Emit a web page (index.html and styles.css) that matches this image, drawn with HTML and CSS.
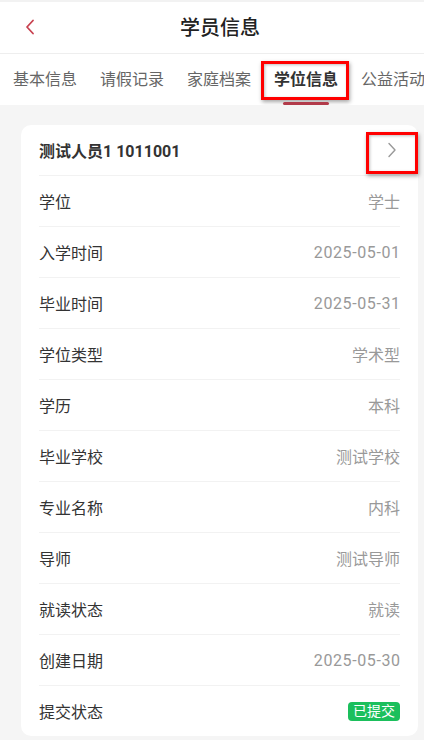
FILE: index.html
```html
<!DOCTYPE html>
<html lang="zh-CN">
<head>
<meta charset="utf-8">
<title>学员信息</title>
<link rel="stylesheet" href="styles.css">
</head>
<body>
<div class="top-strip"></div>
<header class="navbar">
  <span class="back">
    <svg width="10" height="16" viewBox="0 0 10 16"><path d="M8 1.5 L2 8 L8 14.5" fill="none" stroke="#c8414f" stroke-width="1.8" stroke-linecap="round" stroke-linejoin="round"/></svg>
  </span>
  <h1 class="title">学员信息</h1>
</header>
<nav class="tabs">
  <span class="tab">基本信息</span>
  <span class="tab">请假记录</span>
  <span class="tab">家庭档案</span>
  <span class="tab active">学位信息</span>
  <span class="tab">公益活动</span>
</nav>
<main class="content">
  <section class="card">
    <div class="row head">
      <span class="name">测试人员1 1011001</span>
      <span class="arrow">
        <svg width="10" height="16" viewBox="0 0 10 16"><path d="M2 1.5 L8 8 L2 14.5" fill="none" stroke="#999" stroke-width="1.4" stroke-linecap="round" stroke-linejoin="round"/></svg>
      </span>
    </div>
    <div class="row"><span class="label">学位</span><span class="value">学士</span></div>
    <div class="row"><span class="label">入学时间</span><span class="value num">2025-05-01</span></div>
    <div class="row"><span class="label">毕业时间</span><span class="value num">2025-05-31</span></div>
    <div class="row"><span class="label">学位类型</span><span class="value">学术型</span></div>
    <div class="row"><span class="label">学历</span><span class="value">本科</span></div>
    <div class="row"><span class="label">毕业学校</span><span class="value">测试学校</span></div>
    <div class="row"><span class="label">专业名称</span><span class="value">内科</span></div>
    <div class="row"><span class="label">导师</span><span class="value">测试导师</span></div>
    <div class="row"><span class="label">就读状态</span><span class="value">就读</span></div>
    <div class="row"><span class="label">创建日期</span><span class="value num">2025-05-30</span></div>
    <div class="row"><span class="label">提交状态</span><span class="badge">已提交</span></div>
  </section>
</main>
</body>
</html>
```

FILE: styles.css
```css
* { box-sizing: border-box; }
html, body {
  margin: 0;
  padding: 0;
  background: #f5f5f5;
  font-family: Roboto, "Noto Sans CJK SC", "Noto Sans", sans-serif;
  width: 424px;
  height: 740px;
  overflow: hidden;
}
.top-strip { height: 2px; background: #f2f2f2; }
.navbar {
  height: 52px;
  background: #fff;
  display: flex;
  align-items: center;
  justify-content: center;
  padding-left: 16px;
  position: relative;
  border-bottom: 1px solid #eeeeee;
}
.back {
  position: absolute;
  left: 25px;
  top: 17px;
  display: flex;
}
.title {
  margin: 0;
  font-size: 20px;
  font-weight: 500;
  color: #222;
  line-height: 52px;
}
.tabs {
  height: 51px;
  background: #fff;
  display: flex;
  align-items: center;
  gap: 23px;
  padding-left: 13px;
  white-space: nowrap;
  overflow: hidden;
}
.tab {
  font-size: 16px;
  color: #666;
  line-height: 24px;
  flex: none;
  position: relative;
}
.tab.active {
  color: #333;
  font-weight: 700;
}
.tab.active::before {
  content: "";
  position: absolute;
  left: -13px;
  right: -11px;
  top: -7px;
  bottom: -8px;
  border: 3px solid #f00;
  box-shadow: 1px 2px 4px rgba(0,0,0,0.35), inset 1px 1px 3px rgba(0,0,0,0.25);
}
.tab.active::after {
  content: "";
  position: absolute;
  left: 9px;
  width: 46px;
  height: 3px;
  border-radius: 2px;
  bottom: -13px;
  background: #b23b4a;
}
.content {
  padding: 20px 6px 0 21px;
}
.card {
  background: #fff;
  border-radius: 10px;
  padding: 0 18px;
}
.row {
  height: 51px;
  display: flex;
  align-items: center;
  justify-content: space-between;
  border-bottom: 1px solid #f2f2f2;
  font-size: 16px;
}
.row:last-child { border-bottom: none; height: 50px; }
.name { font-weight: 700; color: #333; }
.arrow {
  display: flex;
  margin-right: 3px;
  position: relative;
}
.arrow::after {
  content: "";
  position: absolute;
  left: -21px;
  top: -10px;
  width: 46px;
  height: 36px;
  border: 3px solid #f00;
  box-shadow: 1px 2px 4px rgba(0,0,0,0.35), inset 1px 1px 3px rgba(0,0,0,0.25);
}
.label { color: #333; }
.value { color: #999; }
.value.num { letter-spacing: 0.6px; margin-right: -0.6px; }
.badge {
  background: #1bbf5c;
  color: #fff;
  font-size: 14px;
  line-height: 19px;
  padding: 0 5px;
  border-radius: 4px;
}
```
